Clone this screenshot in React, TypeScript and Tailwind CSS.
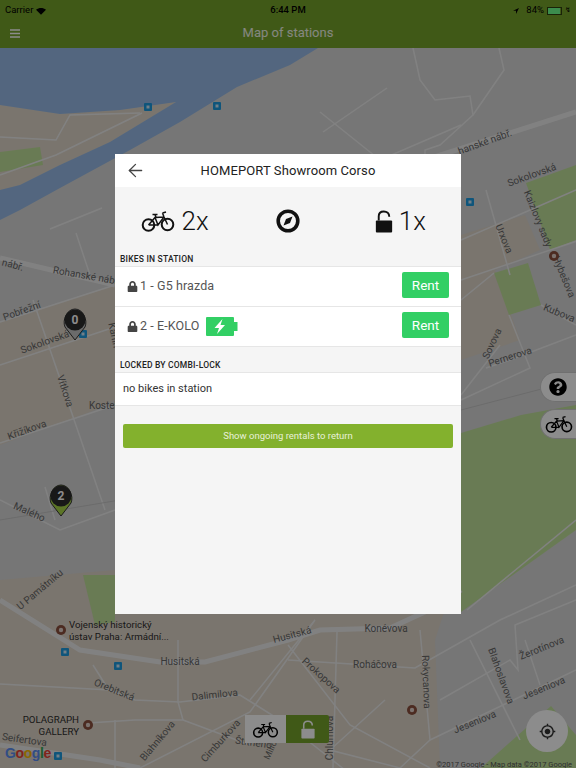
import { ArrowLeft } from "lucide-react";
import { FaLock, FaQuestionCircle } from "react-icons/fa";
import { MdMyLocation } from "react-icons/md";

const sans = "font-['Roboto','Liberation_Sans',sans-serif]";

const waterPath =
  "M0 48L318 48L290 65L237 87L180 122L130 150L60 188L20 210L0 220L0 190L20 185L60 165L110 142L176 102L120 110L60 114L0 105Z";

const warmAreas = [
  "M0 105L60 114L120 110L176 102L110 142L60 165L20 185L0 190Z",
  "M0 322L115 285L115 400L90 412L0 445Z",
  "M0 580L115 570L461 560L435 640L440 768L0 768Z",
  "M461 235L525 215L540 250L495 270L520 340L461 360Z",
];

const greenAreas = [
  "M526 183L576 165L576 240L550 250Z",
  "M494 273L528 263L541 305L509 315Z",
  "M461 433L521 415L576 405L576 530L461 612Z",
  "M83 575L115 575L115 622L95 625Z",
  "M481 768L551 706L576 735L576 768Z",
  "M0 152L40 147L43 165L0 172Z",
];

const thinRoads = [
  "M323 132L387 88",
  "M413 48L420 80L435 100L470 96L473 115L440 145L425 150L425 170",
  "M499 48L504 70L473 115",
  "M320 112L380 160L461 125",
  "M0 137L56 140L70 115L140 113",
  "M0 175L56 155L142 113",
  "M50 229L102 208",
  "M76 233L90 275",
  "M33 300L105 510",
  "M0 322L115 285",
  "M0 365L115 327",
  "M0 443L115 405",
  "M45 487L55 520",
  "M0 500L60 530L115 510",
  "M461 240L576 190",
  "M486 190L510 275",
  "M461 280L580 240",
  "M461 300L494 273",
  "M541 305L576 325",
  "M509 315L530 368L461 400",
  "M486 368L510 360L576 335",
  "M500 345L461 395",
  "M0 684L110 690L135 700L180 702L240 695L288 725L345 770",
  "M178 640L178 702L183 720L135 720L88 723",
  "M115 720L115 768",
  "M183 720L250 745",
  "M250 700L315 620L250 712L140 768",
  "M93 665L110 692",
  "M337 632L333 768",
  "M288 660L415 668L500 620L576 585",
  "M288 645L350 725L430 768",
  "M470 640L520 740",
  "M420 630L430 740L400 768",
  "M430 740L576 670",
  "M385 700L330 750L400 768",
  "M440 700L510 660L518 670L515 625L576 600",
  "M467 610L576 520",
  "M540 685L525 640",
];

const wideRoads = [
  "M425 160L576 112",
  "M0 258L115 285",
  "M0 600L80 650L160 662L205 662L288 640L320 630L390 628L440 605L461 590",
  "M0 745L100 760L140 768",
];

const labels: { t: string; x: number; y: number; r: number; s?: number }[] = [
  { t: "nábř.", x: 12, y: 268, r: 15 },
  { t: "Rohanské nábř.", x: 86, y: 279, r: 10 },
  { t: "Pobřežní", x: 23, y: 314, r: -20 },
  { t: "Sokolovská", x: 46, y: 345, r: -20 },
  { t: "Vítkova", x: 62, y: 392, r: 72 },
  { t: "Křižíkova", x: 28, y: 433, r: -20 },
  { t: "Malého", x: 28, y: 515, r: 24 },
  { t: "Kostelní", x: 107, y: 409, r: 0 },
  { t: "Karlín", x: 111, y: 336, r: 78 },
  { t: "U Památníku", x: 42, y: 592, r: -40 },
  { t: "Husitská", x: 180, y: 665, r: 0 },
  { t: "Husitská", x: 293, y: 638, r: -15 },
  { t: "Konévova", x: 386, y: 632, r: 0 },
  { t: "Roháčova", x: 375, y: 668, r: 0 },
  { t: "Rokycanova", x: 423, y: 682, r: 88 },
  { t: "Prokopova", x: 319, y: 678, r: 42 },
  { t: "Chlumova", x: 333, y: 738, r: -90 },
  { t: "Blahoslavova", x: 498, y: 677, r: 70 },
  { t: "Žerotínova", x: 543, y: 651, r: -22 },
  { t: "Jeseniova", x: 545, y: 691, r: -22 },
  { t: "Jeseniova", x: 476, y: 725, r: -22 },
  { t: "Dalimilova", x: 215, y: 698, r: -6 },
  { t: "Orebitská", x: 113, y: 693, r: 22 },
  { t: "Blahníkova", x: 160, y: 743, r: -50 },
  { t: "Cimburkova", x: 223, y: 743, r: -48 },
  { t: "Štítného", x: 253, y: 746, r: 8 },
  { t: "Milíčova", x: 276, y: 745, r: -65, s: 9 },
  { t: "Seifertova", x: 24, y: 743, r: 8 },
  { t: "hanské nábř.", x: 486, y: 145, r: -20 },
  { t: "Sokolovská", x: 533, y: 178, r: -20 },
  { t: "Kaizlovy sady", x: 535, y: 220, r: 68 },
  { t: "Urxova", x: 501, y: 240, r: 68 },
  { t: "Hybešova", x: 561, y: 278, r: 68 },
  { t: "Kubova", x: 558, y: 316, r: 22 },
  { t: "Pernerova", x: 511, y: 360, r: -18 },
  { t: "Sovova", x: 495, y: 345, r: -65 },
];

const transitStops = [
  [148, 107],
  [217, 106],
  [470, 202],
  [83, 334],
  [65, 652],
  [118, 666],
  [58, 756],
];

const pois = [
  [61, 630],
  [88, 725],
  [412, 710],
  [554, 256],
];

function MapBackground() {
  return (
    <svg viewBox="0 0 576 768" className="absolute inset-0 h-full w-full">
      <rect width="576" height="768" fill="#d7d7d7" />
      {warmAreas.map((d) => (
        <path key={d} d={d} fill="#ded5c8" />
      ))}
      {greenAreas.map((d) => (
        <path key={d} d={d} fill="#c0e09a" />
      ))}
      <path d={waterPath} fill="#97bbe7" />
      {thinRoads.map((d) => (
        <path key={d} d={d} fill="none" stroke="#ececec" strokeWidth="1.5" />
      ))}
      {wideRoads.map((d) => (
        <path key={d} d={d} fill="none" stroke="#ececec" strokeWidth="5" />
      ))}
      <path d="M0 520L120 500L461 410L576 380" fill="none" stroke="#c4c4c4" strokeWidth="1" />
      {labels.map((l) => (
        <text
          key={l.t + l.x}
          x={l.x}
          y={l.y}
          fontFamily="Roboto, sans-serif"
          fontSize={l.s ?? 10}
          fill="#666666"
          textAnchor="middle"
          transform={`rotate(${l.r} ${l.x} ${l.y})`}
        >
          {l.t}
        </text>
      ))}
      {transitStops.map(([x, y]) => (
        <g key={x}>
          <rect x={x - 4} y={y - 4} width="8" height="8" rx="1" fill="#1c9be0" />
          <rect x={x - 1.5} y={y - 1.5} width="3" height="3" fill="#cfe8f7" />
        </g>
      ))}
      <g fontFamily="Roboto, sans-serif" fontSize="9.7" fill="#2e2e2e">
        <text x="69" y="628">Vojenský historický</text>
        <text x="69" y="640">ústav Praha: Armádní...</text>
        <text x="79" y="723" textAnchor="end">POLAGRAPH</text>
        <text x="79" y="735" textAnchor="end">GALLERY</text>
      </g>
      {pois.map(([x, y]) => (
        <g key={x}>
          <circle cx={x} cy={y} r="5" fill="#8a4f3c" />
          <circle cx={x} cy={y} r="2.2" fill="#e0cfc8" />
        </g>
      ))}
      <text x="5" y="758" fontFamily="'Liberation Sans', sans-serif" fontSize="14" fontWeight="bold" letterSpacing="-0.4">
        <tspan fill="#5a8cf0">G</tspan>
        <tspan fill="#ea4335">o</tspan>
        <tspan fill="#fbbc05">o</tspan>
        <tspan fill="#5a8cf0">g</tspan>
        <tspan fill="#34a853">l</tspan>
        <tspan fill="#ea4335">e</tspan>
      </text>
      <text x="572" y="767" textAnchor="end" fontFamily="Roboto, sans-serif" fontSize="7.5" fill="#555555">
        ©2017 Google - Map data ©2017 Google
      </text>
    </svg>
  );
}

function BikeIcon({ className }: { className?: string }) {
  return (
    <svg viewBox="0 0 34 22" className={className} fill="none" stroke="currentColor">
      <circle cx="7.500" cy="15" r="5.800" strokeWidth="2" />
      <circle cx="26.500" cy="14.500" r="5.800" strokeWidth="2" />
      <path
        d="M7.500 15L14 7.500L23 7L26.500 14.500M14 7.500L17 15L23 7M7.500 15L17 15M11.500 4.500H16.500M14 4.500L15 7.500M21.500 3L25 2M21.500 3L23 7"
        strokeWidth="1.5"
      />
    </svg>
  );
}

function CompassIcon() {
  return (
    <svg viewBox="0 0 24 24" className="h-[24px] w-[24px]">
      <circle cx="12" cy="12" r="9.800" fill="none" stroke="#111111" strokeWidth="3.600" />
      <path d="M16.500 7.500L14 14L7.500 16.500L10 10Z" fill="#111111" />
    </svg>
  );
}

function UnlockIcon({ className }: { className?: string }) {
  return (
    <svg viewBox="0 0 18 24" className={className} fill="currentColor">
      <rect x="0.500" y="11" width="17" height="12.500" rx="1" />
      <path d="M3.500 11V6.500C3.500 3.500 5.500 1.500 8.750 1.500C12 1.500 14.500 3.500 14.500 7" fill="none" stroke="currentColor" strokeWidth="2" />
    </svg>
  );
}

function MenuIcon() {
  return (
    <svg viewBox="0 0 10 8.500" className="h-[9px] w-[10px]" fill="#ffffff">
      <rect width="10" height="1.500" />
      <rect y="3.500" width="10" height="1.500" />
      <rect y="7" width="10" height="1.500" />
    </svg>
  );
}

function BatteryIcon() {
  return (
    <svg viewBox="0 0 32 19" className="h-[19px] w-[32px]">
      <rect width="28" height="19" rx="1" fill="#32cf64" />
      <rect x="28" y="5" width="3.500" height="9" fill="#32cf64" />
      <path d="M16.500 2L8.500 11H13L11 17L19 8H14.500Z" fill="#ffffff" />
    </svg>
  );
}

function MapPin({ count, color, className }: { count: number; color: string; className: string }) {
  return (
    <div className={`absolute h-[33px] w-[24px] ${className}`}>
      <svg viewBox="0 0 24 33" className="h-full w-full">
        <path d="M12 32L2 19C-1 12 4 1 12 1C20 1 25 12 22 19Z" fill={color} stroke="#333333" strokeWidth="1" />
        <circle cx="12" cy="12" r="10.500" fill="#2c2c2c" />
      </svg>
      <span className={`absolute left-0 right-0 top-[3px] text-center text-[12px] font-bold text-white ${sans}`}>
        {count}
      </span>
    </div>
  );
}

function SectionLabel({ children }: { children: string }) {
  return <p className="px-[5px] text-[8.5px] font-medium uppercase leading-none tracking-[0.2px] text-[#222222]">{children}</p>;
}

function BikeRow({ name, battery }: { name: string; battery?: boolean }) {
  return (
    <div className="flex h-[40px] items-center border-b border-[#e6e6e6] bg-white px-[12px]">
      <FaLock className="mr-[2px] h-[11px] w-[11px] text-[#444444]" />
      <span className="text-[12.5px] tracking-[0.1px] text-[#555555]">{name}</span>
      {battery && (
        <span className="ml-[7px] flex">
          <BatteryIcon />
        </span>
      )}
      <button className="mb-[2px] ml-auto h-[26px] w-[47px] rounded-[2px] bg-[#32cf64] text-[13.5px] text-white">Rent</button>
    </div>
  );
}

function StationDialog() {
  return (
    <div className={`flex h-[460px] w-[346px] flex-col bg-[#f5f5f5] ${sans}`}>
      <div className="relative flex h-[33px] items-center justify-center bg-white">
        <ArrowLeft className="absolute left-[10px] h-[21px] w-[21px] text-[#444444]" strokeWidth={1.5} />
        <h2 className="text-[13px] font-normal tracking-[0.1px] text-[#222222]">HOMEPORT Showroom Corso</h2>
      </div>

      <div className="grid h-[64px] grid-cols-3 items-center pt-[4px] text-[#111111]">
        <div className="flex items-center justify-center gap-[7px] pl-[4px]">
          <BikeIcon className="h-[22px] w-[34px]" />
          <span className="text-[26px] font-light leading-none">2x</span>
        </div>
        <div className="flex justify-center">
          <CompassIcon />
        </div>
        <div className="flex items-center justify-center gap-[6px] pr-[6px]">
          <UnlockIcon className="h-[23px] w-[18px]" />
          <span className="text-[26px] font-light leading-none">1x</span>
        </div>
      </div>

      <div className="pb-[2px] pt-[4px]">
        <SectionLabel>Bikes in station</SectionLabel>
      </div>
      <div className="border-t border-[#e6e6e6]">
        <BikeRow name="1 - G5 hrazda" />
        <BikeRow name="2 - E-KOLO" battery />
      </div>

      <div className="pb-[3px] pt-[14px]">
        <SectionLabel>Locked by combi-lock</SectionLabel>
      </div>
      <div className="flex h-[34px] items-center border-y border-[#e6e6e6] bg-white px-[8px] text-[11px] text-[#333333]">
        no bikes in station
      </div>

      <button className="mx-[8px] mt-[18px] h-[24px] rounded-[2px] bg-[#83b12d] text-[9.5px] text-[#e8f0d8]">
        Show ongoing rentals to return
      </button>
    </div>
  );
}

export default function App() {
  return (
    <div className={`relative flex h-[768px] w-[576px] flex-col overflow-hidden ${sans}`}>
      <MapBackground />

      <header className="relative bg-[#76a32a] pt-px">
        <div className="relative flex h-[19px] items-center justify-between px-[5px] text-[9.5px] text-black">
          <span className="flex items-center gap-[3px]">
            Carrier
            <svg viewBox="0 0 12 9" className="h-[8px] w-[10px]" fill="#000000">
              <path d="M6 9L0 3C3.500 0 8.500 0 12 3Z" />
            </svg>
          </span>
          <span className="absolute left-0 right-0 text-center font-medium">6:44 PM</span>
          <span className="flex items-center gap-[3px]">
            <svg viewBox="0 0 8 8" className="h-[6px] w-[6px]" fill="#000000">
              <path d="M8 0L0 3.500H4V8Z" />
            </svg>
            <span className="ml-[4px]">84%</span>
            <span className="flex h-[8px] w-[15px] border border-black/60">
              <span className="w-[12px] bg-[#6dff8f]" />
            </span>
            <span className="text-[7px]">↯</span>
          </span>
        </div>
        <div className="relative flex h-[28px] items-center justify-center pb-[2px]">
          <span className="absolute left-[10px] flex">
            <MenuIcon />
          </span>
          <h1 className="text-[13px] font-normal text-white/90">Map of stations</h1>
        </div>
      </header>

      <MapPin count={0} color="#c4c4c4" className="left-[63px] top-[308px]" />
      <MapPin count={2} color="#a8d548" className="left-[49px] top-[484px]" />

      <div className="absolute right-0 top-[372px] flex h-[30px] w-[36px] items-center rounded-l-[15px] border border-r-0 border-[#cccccc] bg-white pl-[8px]">
        <FaQuestionCircle className="h-[18px] w-[18px] text-black" />
      </div>
      <div className="absolute right-0 top-[409px] flex h-[30px] w-[36px] items-center rounded-l-[15px] border border-r-0 border-[#cccccc] bg-white pl-[4px]">
        <BikeIcon className="h-[18px] w-[28px] text-black" />
      </div>

      <div className="absolute bottom-[25px] left-[245px] flex h-[28px]">
        <div className="flex w-[41px] items-center justify-center bg-white">
          <BikeIcon className="h-[17px] w-[27px] text-black" />
        </div>
        <div className="flex w-[43px] items-center justify-center rounded-r-[2px] bg-[#76a32a]">
          <UnlockIcon className="h-[19px] w-[14px] text-white" />
        </div>
      </div>

      <div className="absolute left-[526px] top-[710px] flex h-[42px] w-[42px] items-center justify-center rounded-full bg-white">
        <MdMyLocation className="h-[17px] w-[17px] text-[#333333]" />
      </div>

      {/* dim layer over the whole page, the dialog sits on top of it */}
      <div className="absolute inset-0 flex items-center justify-center bg-black/45">
        <StationDialog />
      </div>
    </div>
  );
}
